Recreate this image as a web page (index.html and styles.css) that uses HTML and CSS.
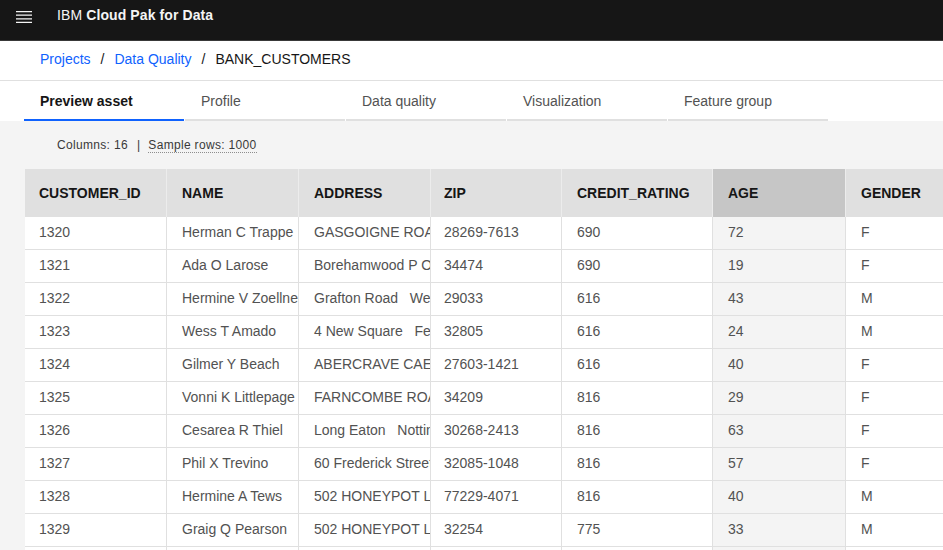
FILE: index.html
```html
<!DOCTYPE html>
<html lang="en">
<head>
<meta charset="utf-8">
<title>BANK_CUSTOMERS - IBM Cloud Pak for Data</title>
<link rel="stylesheet" href="styles.css">
</head>
<body>
<header class="shell-header">
  <button class="menu-btn" aria-label="Open menu">
    <svg width="20" height="20" viewBox="0 0 20 20" fill="#f4f4f4" aria-hidden="true">
      <path d="M2 14.8H18V16H2zM2 11.2H18V12.4H2zM2 7.6H18V8.8H2zM2 4H18V5.2H2z"/>
    </svg>
  </button>
  <span class="brand">IBM <strong>Cloud Pak for Data</strong></span>
</header>

<nav class="breadcrumb" aria-label="Breadcrumb">
  <ol>
    <li><a href="#">Projects</a></li>
    <li><a href="#">Data Quality</a></li>
    <li class="current">BANK_CUSTOMERS</li>
  </ol>
</nav>

<div class="tabs" role="tablist">
  <button class="tab selected" role="tab">Preview asset</button>
  <button class="tab" role="tab">Profile</button>
  <button class="tab" role="tab">Data quality</button>
  <button class="tab" role="tab">Visualization</button>
  <button class="tab" role="tab">Feature group</button>
</div>

<main class="content">
  <div class="summary">Columns: 16<span class="sep">|</span><span class="sample">Sample rows: 1000</span></div>
  <div class="table-wrap">
    <table class="data-table">
      <colgroup>
        <col class="c-id"><col class="c-name"><col class="c-addr"><col class="c-zip"><col class="c-credit"><col class="c-age"><col class="c-gender"><col class="c-more">
      </colgroup>
      <thead>
        <tr><th>CUSTOMER_ID</th><th>NAME</th><th>ADDRESS</th><th>ZIP</th><th>CREDIT_RATING</th><th class="age">AGE</th><th>GENDER</th><th>MARITAL_STATUS</th></tr>
      </thead>
      <tbody>
        <tr><td>1320</td><td>Herman C Trappe</td><td>GASGOIGNE ROAD   BARNSTAPLE</td><td>28269-7613</td><td>690</td><td class="age">72</td><td>F</td><td>S</td></tr>
        <tr><td>1321</td><td>Ada O Larose</td><td>Borehamwood P O Box 1</td><td>34474</td><td>690</td><td class="age">19</td><td>F</td><td>S</td></tr>
        <tr><td>1322</td><td>Hermine V Zoellner</td><td>Grafton Road   West Bromwich</td><td>29033</td><td>616</td><td class="age">43</td><td>M</td><td>M</td></tr>
        <tr><td>1323</td><td>Wess T Amado</td><td>4 New Square   Feltham</td><td>32805</td><td>616</td><td class="age">24</td><td>M</td><td>S</td></tr>
        <tr><td>1324</td><td>Gilmer Y Beach</td><td>ABERCRAVE CAERLEON</td><td>27603-1421</td><td>616</td><td class="age">40</td><td>F</td><td>M</td></tr>
        <tr><td>1325</td><td>Vonni K Littlepage</td><td>FARNCOMBE ROAD   WORTHING</td><td>34209</td><td>816</td><td class="age">29</td><td>F</td><td>S</td></tr>
        <tr><td>1326</td><td>Cesarea R Thiel</td><td>Long Eaton   Nottingham</td><td>30268-2413</td><td>816</td><td class="age">63</td><td>F</td><td>M</td></tr>
        <tr><td>1327</td><td>Phil X Trevino</td><td>60 Frederick Street</td><td>32085-1048</td><td>816</td><td class="age">57</td><td>F</td><td>M</td></tr>
        <tr><td>1328</td><td>Hermine A Tews</td><td>502 HONEYPOT LANE</td><td>77229-4071</td><td>816</td><td class="age">40</td><td>M</td><td>M</td></tr>
        <tr><td>1329</td><td>Graig Q Pearson</td><td>502 HONEYPOT LANE</td><td>32254</td><td>775</td><td class="age">33</td><td>M</td><td>S</td></tr>
        <tr><td>1330</td><td>Melva T Kerr</td><td>12 High Street</td><td>29301</td><td>775</td><td class="age">51</td><td>F</td><td>M</td></tr>
      </tbody>
    </table>
  </div>
</main>
</body>
</html>
```

FILE: styles.css
```css
* {
  box-sizing: border-box;
}

html, body {
  margin: 0;
  padding: 0;
}

body {
  width: 943px;
  height: 550px;
  overflow: hidden;
  background: #f4f4f4;
  font-family: "Liberation Sans", Arial, sans-serif;
  font-size: 14px;
  color: #161616;
}

/* Shell header */
.shell-header {
  height: 41px;
  background: #161616;
  border-bottom: 1px solid #393939;
  display: flex;
  align-items: flex-start;
  padding: 0 0 0 14px;
}

.menu-btn {
  width: 20px;
  height: 20px;
  padding: 0;
  margin: 7px 0 0 0;
  border: 0;
  background: transparent;
  display: flex;
}

.brand {
  margin: 7px 0 0 23px;
  line-height: 16px;
  color: #f4f4f4;
  font-size: 14px;
  letter-spacing: 0.1px;
}

.brand strong {
  font-weight: 600;
}

/* Breadcrumb */
.breadcrumb {
  height: 40px;
  background: #ffffff;
  border-bottom: 1px solid #e0e0e0;
  display: flex;
  align-items: center;
  padding: 0 0 4px 40px;
}

.breadcrumb ol {
  list-style: none;
  margin: 0;
  padding: 0;
  display: flex;
  align-items: center;
}

.breadcrumb li {
  display: flex;
  align-items: center;
}

.breadcrumb li + li::before {
  content: "/";
  color: #161616;
  margin: 0 10px 0 10px;
}

.breadcrumb a {
  color: #0f62fe;
  text-decoration: none;
}

.breadcrumb .current {
  color: #161616;
}

/* Tabs */
.tabs {
  height: 40px;
  background: #ffffff;
  display: flex;
  padding-left: 24px;
}

.tab {
  width: 160px;
  height: 40px;
  margin: 0 1px 0 0;
  padding: 2px 16px 0 16px;
  border: 0;
  border-bottom: 2px solid #e0e0e0;
  background: transparent;
  font-family: inherit;
  font-size: 14px;
  color: #525252;
  text-align: left;
  white-space: nowrap;
}

.tab.selected {
  border-bottom-color: #0f62fe;
  color: #161616;
  font-weight: 600;
}

/* Content */
.content {
  padding-left: 25px;
}

.summary {
  height: 48px;
  display: flex;
  align-items: center;
  padding-left: 32px;
  font-size: 12px;
  letter-spacing: 0.32px;
  color: #393939;
}

.summary .sep {
  margin: 0 8px 0 9px;
}

.summary .sample {
  border-bottom: 1px dotted #8d8d8d;
  line-height: 14px;
}

.table-wrap {
  overflow: hidden;
}

.data-table {
  table-layout: fixed;
  border-collapse: separate;
  border-spacing: 0;
  width: 1101px;
}

.c-id { width: 142px; }
.c-name { width: 132px; }
.c-addr { width: 132px; }
.c-zip { width: 131px; }
.c-credit { width: 151px; }
.c-age { width: 133px; }
.c-gender { width: 140px; }
.c-more { width: 140px; }

.data-table th,
.data-table td {
  white-space: pre;
  overflow: hidden;
  text-overflow: clip;
  text-align: left;
  padding: 0 2px 0 15px;
  border-right: 1px solid #e0e0e0;
}

.data-table th:first-child,
.data-table td:first-child {
  padding-left: 14px;
}

.data-table th:nth-child(4),
.data-table td:nth-child(4) {
  padding-left: 13px;
}

.data-table th {
  height: 48px;
  background: #e0e0e0;
  color: #161616;
  font-weight: 600;
  font-size: 14px;
  border-right-color: #ececec;
}

.data-table th.age {
  background: #c6c6c6;
}

.data-table td {
  height: 33px;
  background: #ffffff;
  color: #525252;
  border-bottom: 1px solid #e0e0e0;
  padding-bottom: 3px;
}

.data-table td.age {
  background: #f4f4f4;
}
```
